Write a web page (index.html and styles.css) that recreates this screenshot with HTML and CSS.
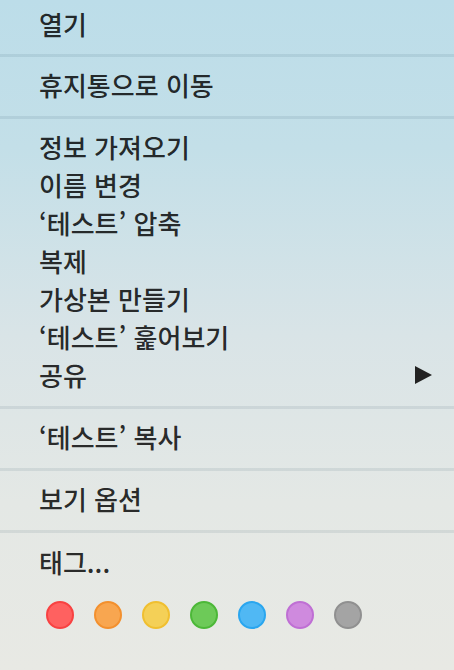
FILE: index.html
```html
<!DOCTYPE html>
<html lang="ko">
<head>
  <meta charset="UTF-8">
  <meta name="viewport" content="width=device-width, initial-scale=1.0">
  <title>컨텍스트 메뉴</title>
  <link rel="stylesheet" href="styles.css">
</head>
<body>
  <div class="menu">
    <div class="group first">
      <div class="item">열기</div>
    </div>
    <div class="group">
      <div class="item">휴지통으로 이동</div>
    </div>
    <div class="group">
      <div class="item">정보 가져오기</div>
      <div class="item">이름 변경</div>
      <div class="item">‘테스트’ 압축</div>
      <div class="item">복제</div>
      <div class="item">가상본 만들기</div>
      <div class="item">‘테스트’ 훑어보기</div>
      <div class="item submenu">공유 <span class="arrow"></span></div>
    </div>
    <div class="group">
      <div class="item">‘테스트’ 복사</div>
    </div>
    <div class="group">
      <div class="item">보기 옵션</div>
    </div>
    <div class="group last">
      <div class="item">태그...</div>
      <div class="tags">
        <span class="tag red"></span>
        <span class="tag orange"></span>
        <span class="tag yellow"></span>
        <span class="tag green"></span>
        <span class="tag blue"></span>
        <span class="tag purple"></span>
        <span class="tag gray"></span>
      </div>
    </div>
  </div>
</body>
</html>
```

FILE: styles.css
```css
html, body {
  margin: 0;
  height: 100%;
}
body {
  font-family: "Noto Sans CJK KR", "Noto Sans", sans-serif;
  background: linear-gradient(to bottom, #bcdde9 0%, #c3dfe8 22%, #d9e4e7 50%, #e4e8e5 75%, #e8e9e4 100%);
  color: rgba(0, 0, 0, 0.84);
  overflow: hidden;
}
.menu {
  display: flex;
  flex-direction: column;
}
.group {
  padding: 9px 0 12px;
  border-bottom: 3px solid rgba(20, 60, 80, 0.09);
}
.group.first {
  padding-top: 5px;
  padding-bottom: 11px;
}
.group.last {
  border-bottom: none;
  padding-top: 10px;
}
.item {
  height: 38px;
  line-height: 38px;
  padding: 0 22px 0 39px;
  font-size: 26px;
  font-weight: 500;
  white-space: nowrap;
}
.submenu {
  display: flex;
  justify-content: space-between;
  align-items: center;
}
.arrow {
  width: 0;
  height: 0;
  border-top: 9px solid transparent;
  border-bottom: 9px solid transparent;
  border-left: 17px solid #222;
}
.tags {
  display: flex;
  gap: 20px;
  padding: 20px 0 0 46px;
}
.tag {
  box-sizing: border-box;
  width: 28px;
  height: 28px;
  border-radius: 50%;
  border: 2px solid;
}
.red { background: #ff6160; border-color: #f84242; }
.orange { background: #f8a650; border-color: #f3902e; }
.yellow { background: #f4d057; border-color: #f0bf30; }
.green { background: #6dca58; border-color: #4cb838; }
.blue { background: #50b8f4; border-color: #2aa6ef; }
.purple { background: #cf8ade; border-color: #bf6fd4; }
.gray { background: #a4a4a4; border-color: #909090; }
```
